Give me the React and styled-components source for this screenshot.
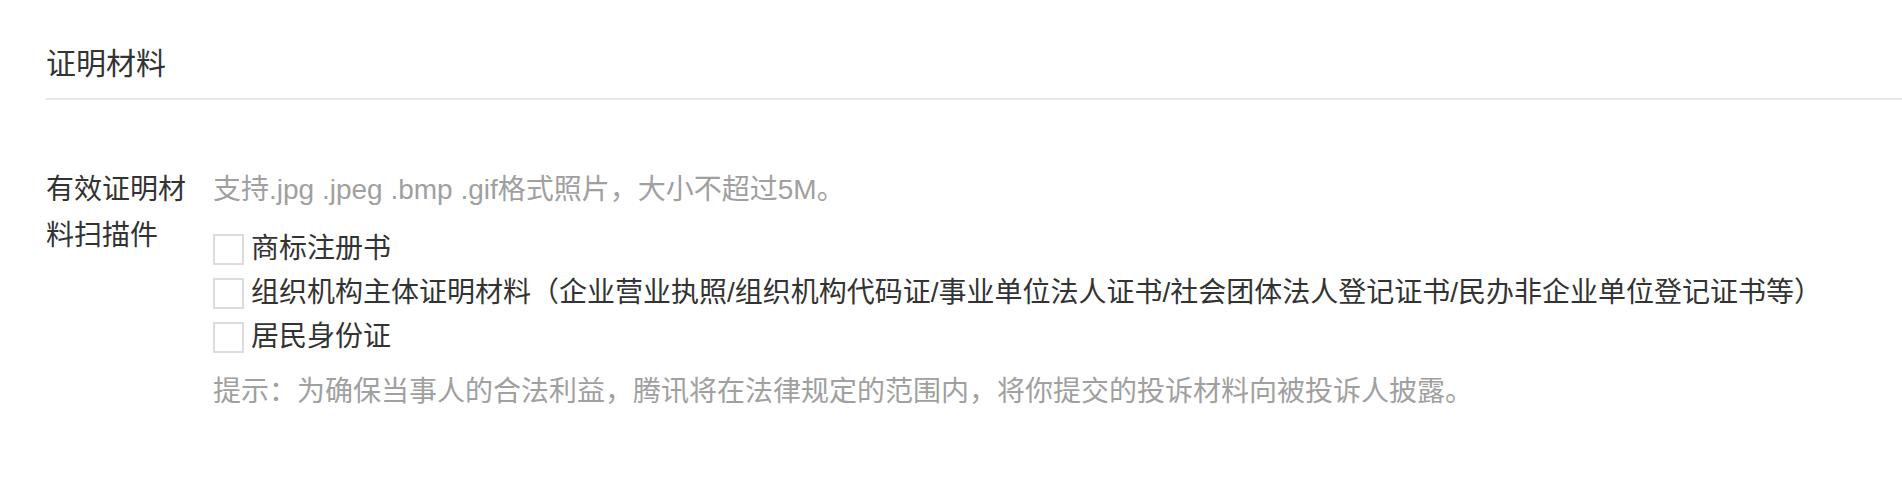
import React from 'react';
import styled, { createGlobalStyle } from 'styled-components';

const GlobalStyle = createGlobalStyle`
  body {
    margin: 0;
    background: #fff;
    font-family: "Liberation Sans", "Noto Sans CJK SC", sans-serif;
    color: #333;
  }
`;

const Page = styled.div`
  padding-left: 46px;
`;

const SectionTitle = styled.h2`
  margin: 0;
  padding: 49px 0 19px;
  font-size: 30px;
  line-height: 30px;
  font-weight: normal;
  color: #333;
  border-bottom: 2px solid #e6e6eb;
`;

const FormRow = styled.div`
  display: flex;
  align-items: flex-start;
  gap: 19px;
  margin-top: 67px;
  font-size: 28px;
  line-height: 46px;
`;

const Label = styled.div`
  width: 148px;
  flex-shrink: 0;
  color: #333;
`;

const Content = styled.div`
  flex: 1;
  display: flex;
  flex-direction: column;
`;

const Hint = styled.div`
  color: #a0a0a0;
  margin-top: ${(p) => p.$top || 0}px;
`;

const CheckList = styled.div`
  display: flex;
  flex-direction: column;
  margin-top: 14px;
`;

const CheckRow = styled.label`
  display: flex;
  align-items: center;
  height: 44px;
  gap: 7px;
  color: #333;
  cursor: pointer;
`;

const Box = styled.span`
  width: 31px;
  height: 31px;
  box-sizing: border-box;
  border: 2px solid #dcdcdf;
  background: #fff;
  flex-shrink: 0;
`;

const options = [
  '商标注册书',
  '组织机构主体证明材料（企业营业执照/组织机构代码证/事业单位法人证书/社会团体法人登记证书/民办非企业单位登记证书等）',
  '居民身份证',
];

export default function App() {
  return (
    <Page>
      <GlobalStyle />
      <SectionTitle>证明材料</SectionTitle>
      <FormRow>
        <Label>有效证明材料扫描件</Label>
        <Content>
          <Hint>支持.jpg .jpeg .bmp .gif格式照片，大小不超过5M。</Hint>
          <CheckList>
            {options.map((o) => (
              <CheckRow key={o}>
                <Box />
                <span>{o}</span>
              </CheckRow>
            ))}
          </CheckList>
          <Hint $top={10}>提示：为确保当事人的合法利益，腾讯将在法律规定的范围内，将你提交的投诉材料向被投诉人披露。</Hint>
        </Content>
      </FormRow>
    </Page>
  );
}
